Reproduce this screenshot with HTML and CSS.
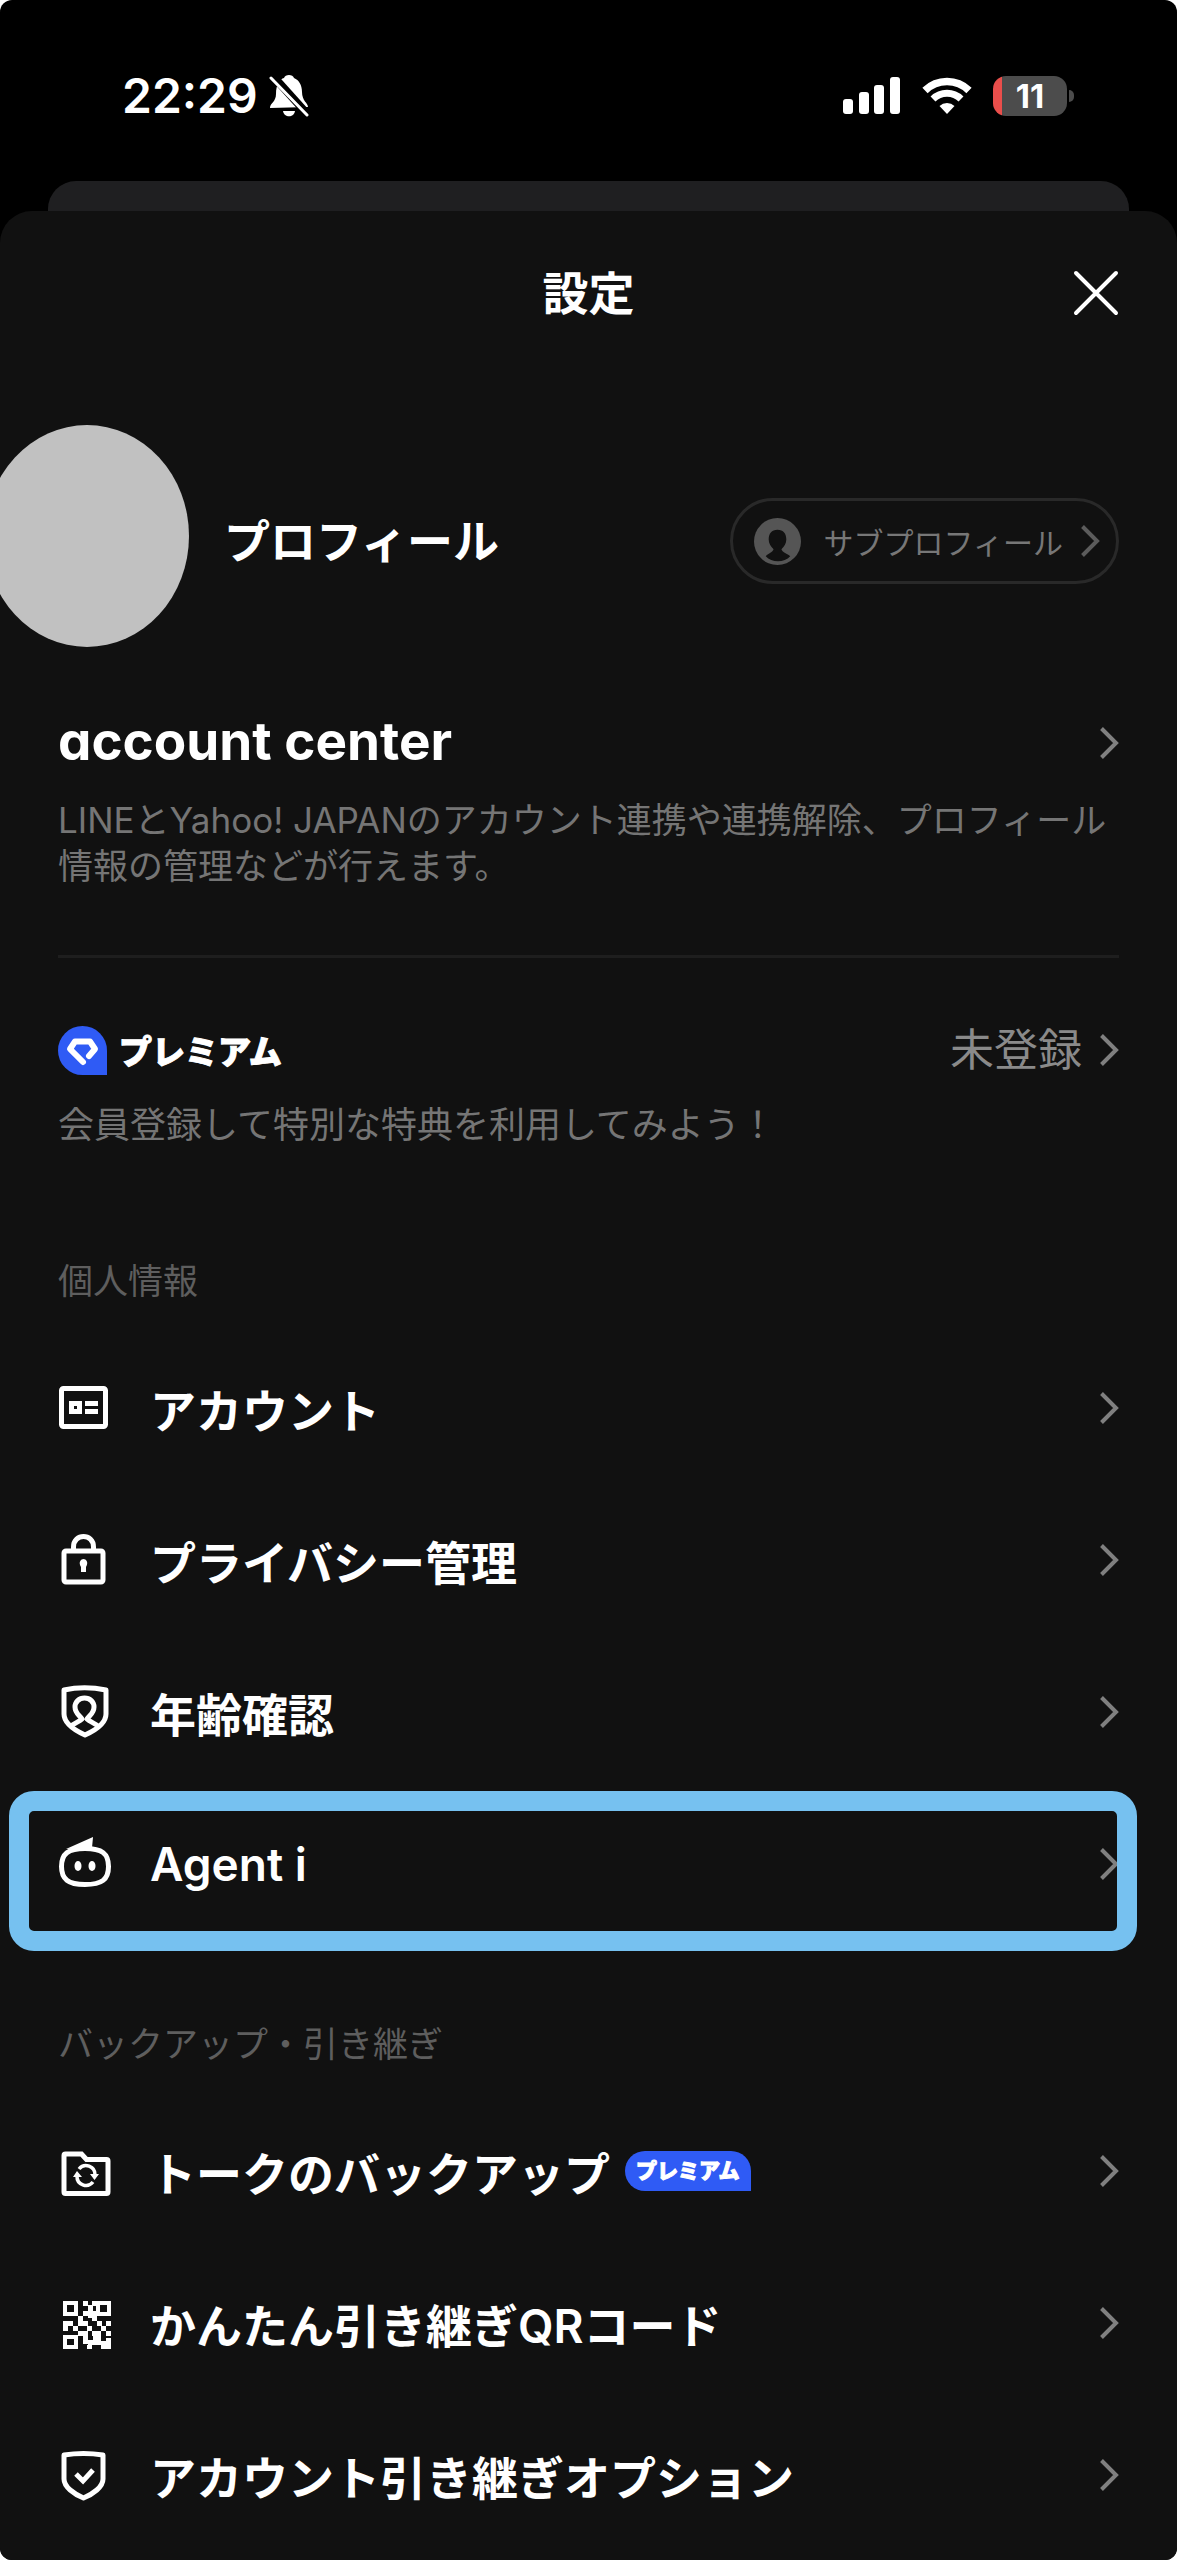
FILE: index.html
```html
<!DOCTYPE html>
<html lang="ja">

<head>
    <meta charset="UTF-8" />
    <meta name="viewport" content="width=device-width, initial-scale=1.0" />
    <title>設定</title>
    <link rel="stylesheet" href="styles.css">
</head>

<body>
    <!-- Shared shapes -->
    <svg class="hidden" aria-hidden="true">
        <symbol id="chevron" viewBox="0 0 20 34">
            <path d="M2.5 2.5 17 17 2.5 31.5" fill="none" stroke="currentColor" stroke-width="4" />
        </symbol>
    </svg>

    <div class="screen">
        <div class="status-bar">
            <span class="time">22:29</span>
            <svg class="bell" width="40" height="44" viewBox="0 0 40 44">
                <path d="M1 34c0-5 6-6 6-14C7 10 11 5 15 4c1-4 9-4 10 0 5 2 8 7 8 14 0 9 6 11 6 15z" fill="#fff" />
                <path d="M14 37h12c-1 7-11 7-12 0z" fill="#fff" />
                <path d="M4 2 41 43" stroke="#000" stroke-width="8" />
                <path d="M2 4 38 41" stroke="#fff" stroke-width="3" stroke-linecap="round" />
            </svg>
            <div class="status-icons">
                <svg width="58" height="37" viewBox="0 0 58 37" fill="#fff">
                    <rect x="0" y="22" width="10" height="15" rx="3" />
                    <rect x="16" y="15" width="10" height="22" rx="3" />
                    <rect x="31" y="8" width="10" height="29" rx="3" />
                    <rect x="47" y="0" width="10" height="37" rx="3" />
                </svg>
                <svg width="50" height="37" viewBox="0 0 50 37">
                    <path d="M3 13.500a31.500 31.500 0 0 1 44 0" fill="none" stroke="#fff" stroke-width="7.500" />
                    <path d="M11 22a20 20 0 0 1 28 0" fill="none" stroke="#fff" stroke-width="7" />
                    <path d="M17.500 29a11 11 0 0 1 15 0L25 37z" fill="#fff" />
                </svg>
                <div class="battery"><span class="battery-level">11</span></div>
            </div>
        </div>

        <div class="back-card"></div>

        <main class="sheet">
            <header class="sheet-header">
                <h1>設定</h1>
                <button class="close-btn" type="button" aria-label="閉じる">
                    <svg width="46" height="46" viewBox="0 0 46 46">
                        <path d="M3 3l40 40M43 3 3 43" stroke="#fff" stroke-width="4" stroke-linecap="round" />
                    </svg>
                </button>
            </header>

            <section class="profile">
                <div class="avatar"></div>
                <a class="profile-name" href="#">プロフィール</a>
                <button class="sub-profile" type="button">
                    <svg width="47" height="47" viewBox="0 0 48 48">
                        <circle cx="24" cy="24" r="24" fill="#555" />
                        <path d="M24 12c-6 0-9 4-9 10 0 4 2 7 5 10-1 3-5 4-8 7 6 7 19 7 25 0-4-3-8-4-9-7 3-3 5-6 5-10 0-6-3-10-9-10z" fill="#111" />
                    </svg>
                    <span>サブプロフィール</span>
                    <svg class="chevron"><use href="#chevron" /></svg>
                </button>
            </section>

            <section class="account-center">
                <a class="head-row" href="#">
                    <span class="account-logo">account center</span>
                    <svg class="chevron"><use href="#chevron" /></svg>
                </a>
                <p>LINEとYahoo! JAPANのアカウント連携や連携解除、プロフィール情報の管理などが行えます。</p>
            </section>

            <section class="premium">
                <a class="head-row" href="#">
                    <svg width="49" height="49" viewBox="0 0 49 49">
                        <path d="M24.500 0A24.500 24.500 0 0 1 49 24.500V49H24.500a24.500 24.500 0 0 1 0-49z" fill="#2f5bf5" />
                        <path d="M25 36 12 23l5-7.500h15l5 7.500-6 7" fill="none" stroke="#fff" stroke-width="6" stroke-linecap="round" stroke-linejoin="round" />
                    </svg>
                    <span class="premium-logo">プレミアム</span>
                    <span class="premium-state">未登録</span>
                    <svg class="chevron"><use href="#chevron" /></svg>
                </a>
                <p>会員登録して特別な特典を利用してみよう！</p>
            </section>

            <section class="group">
                <h2>個人情報</h2>
                <ul>
                    <li>
                        <a class="item" href="#">
                            <svg class="icon" viewBox="0 0 54 54">
                                <rect x="3.500" y="7.500" width="44" height="38" rx="2" fill="none" stroke="#fff" stroke-width="5" />
                                <path d="M11 20h13v13H11zM27 20h13v5H27zM27 28h13v5H27z" fill="#fff" />
                                <path d="M16 25h3v3h-3z" fill="#111" />
                            </svg>
                            <span>アカウント</span>
                            <svg class="chevron"><use href="#chevron" /></svg>
                        </a>
                    </li>
                    <li>
                        <a class="item" href="#">
                            <svg class="icon" viewBox="0 0 54 54">
                                <rect x="6" y="18" width="39" height="31" rx="2" fill="none" stroke="#fff" stroke-width="5" />
                                <path d="M15.500 18v-4c0-14 20-14 20 0v4" fill="none" stroke="#fff" stroke-width="5" />
                                <path d="M23 39v-5c-3-5 0-8 2.500-8s5.500 3 2.500 8v5z" fill="#fff" />
                            </svg>
                            <span>プライバシー管理</span>
                            <svg class="chevron"><use href="#chevron" /></svg>
                        </a>
                    </li>
                    <li>
                        <a class="item" href="#">
                            <svg class="icon" viewBox="0 0 54 54" fill="none" stroke="#fff" stroke-width="5" stroke-linejoin="round">
                                <path d="M6 5c13-3 28-3 42 0v24c0 9-10 16-21 21C16 45 6 38 6 29z" />
                                <path d="M12 42c4-4 9-5 12-8-3-4-7-6-7-12 0-5 4-9 9.500-9s9.500 4 9.500 9c0 6-4 8-7 12 3 3 8 4 12 8" />
                            </svg>
                            <span>年齢確認</span>
                            <svg class="chevron"><use href="#chevron" /></svg>
                        </a>
                    </li>
                    <li class="highlighted">
                        <a class="item" href="#">
                            <svg class="icon" viewBox="0 0 54 54">
                                <path d="M27 11.500c17 0 23.500 5 23.500 18S44 47.500 27 47.500 3.500 42 3.500 29.500 10 11.500 27 11.500z" fill="none" stroke="#fff" stroke-width="5" />
                                <path d="M8 12 35 0l-1 11z" fill="#fff" />
                                <ellipse cx="20" cy="29" rx="3.500" ry="5" fill="#fff" />
                                <ellipse cx="34" cy="29" rx="3.500" ry="5" fill="#fff" />
                            </svg>
                            <span>Agent i</span>
                            <svg class="chevron"><use href="#chevron" /></svg>
                        </a>
                    </li>
                </ul>
            </section>

            <section class="group">
                <h2>バックアップ・引き継ぎ</h2>
                <ul>
                    <li>
                        <a class="item" href="#">
                            <svg class="icon" viewBox="0 0 54 54">
                                <path d="M7.500 10h16l5 5.500h20q1.500 0 1.500 1.500v31q0 1.500-1.500 1.500h-41Q6 49.500 6 48V11.500Q6 10 7.500 10z" fill="none" stroke="#fff" stroke-width="5" />
                                <path d="M21 25a9 9 0 0 1 16 6M35 38a9 9 0 0 1-16-6" fill="none" stroke="#fff" stroke-width="3.500" />
                                <path d="M32 30h9l-4.500 6zM15 33h9l-5-6z" fill="#fff" />
                            </svg>
                            <span>トークのバックアップ</span>
                            <span class="badge">プレミアム</span>
                            <svg class="chevron"><use href="#chevron" /></svg>
                        </a>
                    </li>
                    <li>
                        <a class="item" href="#">
                            <svg class="icon" viewBox="0 -2 54 54">
                                <g fill="none" stroke="#fff" stroke-width="4">
                                    <rect x="7" y="5" width="11" height="11" />
                                    <rect x="40" y="5" width="11" height="11" />
                                    <rect x="7" y="39" width="11" height="10" />
                                </g>
                                <path d="M25 3h5v5h-5zM34 3h5v5h-5zM30 7h5v13h-5zM25 13h5v5h-5zM20 18h5v5h-5zM35 13h5v5h-5zM5 23h10v5H5zM5 28h5v5H5zM20 23h10v5H20zM34 18h5v5h-5zM39 23h5v5h-5zM48 23h5v5h-5zM15 28h5v5h-5zM29 28h5v5h-5zM43 28h5v5h-5zM20 33h10v5H20zM34 33h5v5h-5zM38 33h5v5h-5zM48 33h5v5h-5zM25 38h5v8h-5zM30 42h5v5h-5zM35 38h8v9h-8zM43 43h5v8h-5zM48 40h5v11h-5zM29 47h5v4h-5z" fill="#fff" />
                            </svg>
                            <span>かんたん引き継ぎQRコード</span>
                            <svg class="chevron"><use href="#chevron" /></svg>
                        </a>
                    </li>
                    <li>
                        <a class="item" href="#">
                            <svg class="icon" viewBox="0 -2 54 54" fill="none" stroke="#fff" stroke-width="5">
                                <path d="M6 5c13-2 26-2 39 0v24c0 8-10 15-19.500 19C16 44 6 37 6 29z" stroke-linejoin="round" />
                                <path d="m18 24 7 7 10-11" />
                            </svg>
                            <span>アカウント引き継ぎオプション</span>
                            <svg class="chevron"><use href="#chevron" /></svg>
                        </a>
                    </li>
                </ul>
            </section>
        </main>
    </div>
</body>

</html>
```
FILE: styles.css
```css
* {
    box-sizing: border-box;
}

body {
    margin: 0;
    background-color: #fff;
    color: #fff;
    font-family: Inter, "Noto Sans CJK JP", sans-serif;
}

h1,
h2,
p,
ul {
    margin: 0;
    padding: 0;
}

ul {
    list-style: none;
}

a {
    color: inherit;
    text-decoration: none;
}

button {
    background: none;
    border: none;
    padding: 0;
    color: inherit;
    font-family: inherit;
    cursor: pointer;
}

svg {
    display: block;
    flex-shrink: 0;
}

.hidden {
    display: none;
}

.screen {
    background-color: #000;
    border-radius: 12px;
    overflow: hidden;
    min-height: 100vh;
    display: flex;
    flex-direction: column;
}

/* Status bar */
.status-bar {
    display: flex;
    align-items: center;
    height: 181px;
    padding: 10px 103px 0 122px;
}

.time {
    font-size: 48px;
    font-weight: 600;
    margin-right: 11px;
}

.status-icons {
    display: flex;
    align-items: center;
    gap: 21px;
    margin-left: auto;
}

.battery {
    position: relative;
    width: 74px;
    height: 40px;
    border-radius: 13px;
    background: linear-gradient(to right, #ea4e4b 9px, #4c4c4c 9px);
    margin-right: 7px;
}

.battery::after {
    content: "";
    position: absolute;
    top: 14px;
    right: -7px;
    width: 5px;
    height: 12px;
    border-radius: 0 5px 5px 0;
    background-color: #4c4c4c;
}

.battery-level {
    display: block;
    text-align: center;
    font-size: 33px;
    font-weight: 700;
    line-height: 40px;
}

/* Sheets */
.back-card {
    height: 30px;
    margin: 0 48px;
    border-radius: 28px 28px 0 0;
    background-color: #1f1f21;
}

.sheet {
    flex: 1;
    padding: 0 58px;
    border-radius: 32px 32px 0 0;
    background-color: #111;
}

.sheet-header {
    display: grid;
    grid-template-columns: 1fr auto 1fr;
    align-items: center;
    height: 164px;
}

.sheet-header h1 {
    grid-column: 2;
    font-size: 46px;
    font-weight: 700;
    line-height: 64px;
}

.close-btn {
    justify-self: end;
}

.chevron {
    width: 20px;
    height: 34px;
    margin-left: auto;
    color: #808080;
}

/* Profile */
.profile {
    display: flex;
    align-items: center;
    height: 222px;
    margin-top: 50px;
}

.avatar {
    width: 204px;
    height: 222px;
    margin-left: -73px;
    border-radius: 50%;
    background-color: #c1c1c1;
    flex-shrink: 0;
}

.profile-name {
    margin-top: 10px;
    margin-left: 35px;
    font-size: 46px;
    font-weight: 600;
    line-height: 64px;
}

.sub-profile {
    display: flex;
    align-items: center;
    height: 86px;
    margin-top: 10px;
    margin-left: auto;
    padding: 0 16px 0 21px;
    border: 3px solid #292929;
    border-radius: 43px;
    color: #777;
    font-size: 30px;
}

.sub-profile span {
    margin: 0 17px 0 23px;
}

.sub-profile .chevron {
    color: #5c5c5c;
}

/* Account center and premium */
.head-row {
    display: flex;
    align-items: center;
    height: 64px;
}

.account-center {
    margin-top: 64px;
    padding-bottom: 66px;
    border-bottom: 3px solid #1e1e1e;
}

.account-center p,
.premium p {
    color: #757575;
    font-size: 35px;
    line-height: 46px;
}

.account-center p {
    margin-top: 22px;
}

.account-logo {
    font-size: 53px;
    font-weight: 700;
    line-height: 60px;
    padding-bottom: 4px;
    font-feature-settings: "cv11";
}

.premium {
    margin-top: 60px;
}

.premium p {
    margin-top: 20px;
    font-size: 36px;
}

.premium-logo {
    margin-left: 12px;
    font-size: 33px;
    font-weight: 900;
    -webkit-text-stroke: 1px #fff;
}

.premium-state {
    margin-left: auto;
    margin-right: 17px;
    color: #8a8a8a;
    font-size: 44px;
    line-height: 60px;
}

.premium-state + .chevron {
    margin-left: 0;
}

/* Setting groups */
.group h2 {
    color: #5e5e5e;
    font-size: 35px;
    font-weight: 400;
    line-height: 46px;
}

.group {
    margin-top: 110px;
}

.group + .group {
    margin-top: 81px;
}

.group ul {
    margin-top: 28px;
}

.item {
    display: flex;
    align-items: center;
    height: 152px;
    font-size: 46px;
    font-weight: 600;
}

.icon {
    width: 54px;
    height: 54px;
    margin-right: 38px;
}

.highlighted {
    position: relative;
}

.highlighted::after {
    content: "";
    position: absolute;
    top: 3px;
    bottom: -11px;
    left: -49px;
    right: -18px;
    border: 20px solid #76c1f0;
    border-radius: 25px;
}

.badge {
    margin-left: 15px;
    padding: 0 11px;
    border-radius: 20px 20px 0 20px;
    background-color: #2f5bf5;
    font-size: 21px;
    font-weight: 900;
    line-height: 40px;
    -webkit-text-stroke: 1px #fff;
}
```
